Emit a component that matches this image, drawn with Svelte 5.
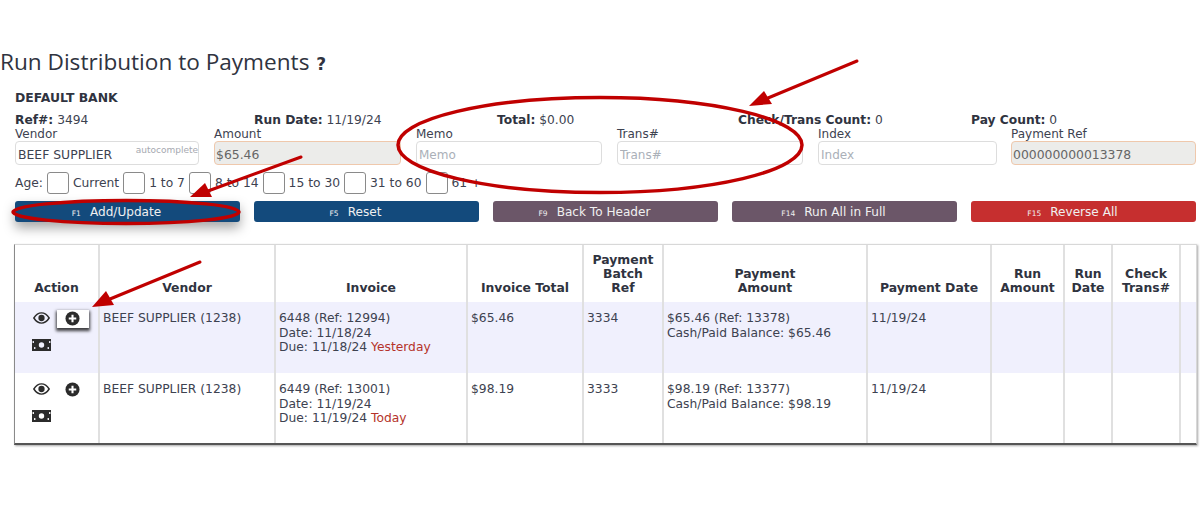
<script>
  const info = [
    ['Ref#:', '3494'],
    ['Run Date:', '11/19/24'],
    ['Total:', '$0.00'],
    ['Check/Trans Count:', '0'],
    ['Pay Count:', '0']
  ];

  const ages = ['Current', '1 to 7', '8 to 14', '15 to 30', '31 to 60', '61 +'];

  const buttons = [
    { key: 'F1', label: 'Add/Update', kind: 'blue glow' },
    { key: 'F5', label: 'Reset', kind: 'blue' },
    { key: 'F9', label: 'Back To Header', kind: 'plum' },
    { key: 'F14', label: 'Run All in Full', kind: 'plum' },
    { key: 'F15', label: 'Reverse All', kind: 'red' }
  ];

  const rows = [
    {
      invoice: '6448 (Ref: 12994)', date: '11/18/24', due: '11/18/24', when: 'Yesterday',
      total: '$65.46', batch: '3334', payment: '$65.46 (Ref: 13378)', balance: '$65.46', highlight: true
    },
    {
      invoice: '6449 (Ref: 13001)', date: '11/19/24', due: '11/19/24', when: 'Today',
      total: '$98.19', batch: '3333', payment: '$98.19 (Ref: 13377)', balance: '$98.19', highlight: false
    }
  ];
</script>

<main class="page">
  <h1>Run Distribution to Payments <span class="help">?</span></h1>

  <section class="form">
    <div class="bank">DEFAULT BANK</div>

    <div class="info">
      {#each info as [label, value]}
        <div><b>{label}</b> {value}</div>
      {/each}
    </div>

    <div class="fields">
      <label>
        <span>Vendor</span>
        <div class="vendor">
          <input value="BEEF SUPPLIER" />
          <small>autocomplete</small>
        </div>
      </label>
      <label><span>Amount</span><input class="locked" value="$65.46" readonly /></label>
      <label><span>Memo</span><input placeholder="Memo" /></label>
      <label><span>Trans#</span><input placeholder="Trans#" /></label>
      <label><span>Index</span><input placeholder="Index" /></label>
      <label><span>Payment Ref</span><input class="locked" value="000000000013378" readonly /></label>
    </div>

    <div class="ages">
      <span>Age:</span>
      {#each ages as age}
        <i class="box"></i><span class="age">{age}</span>
      {/each}
    </div>

    <div class="actions">
      {#each buttons as b}
        <button type="button" class={b.kind}><small>{b.key}</small>{b.label}</button>
      {/each}
    </div>
  </section>

  <div class="card">
    <table>
      <colgroup>
        <col style="width:84px" /><col style="width:176px" /><col style="width:192px" /><col style="width:116px" />
        <col style="width:80px" /><col style="width:204px" /><col style="width:124px" /><col style="width:73px" />
        <col style="width:48px" /><col style="width:68px" /><col />
      </colgroup>
      <thead>
        <tr>
          <th>Action</th><th>Vendor</th><th>Invoice</th><th>Invoice Total</th>
          <th>Payment<br />Batch<br />Ref</th><th>Payment<br />Amount</th><th>Payment Date</th>
          <th>Run<br />Amount</th><th>Run<br />Date</th><th>Check<br />Trans#</th><th></th>
        </tr>
      </thead>
      <tbody>
        {#each rows as r}
          <tr class:highlight={r.highlight}>
            <td class="icons">
              <div class="icon-row">
                <svg class="eye" viewBox="0 0 20 14" width="17" height="12" aria-hidden="true">
                  <path d="M1 7C3.500 3 6.500 1 10 1s6.500 2 9 6c-2.500 4-5.500 6-9 6s-6.500-2-9-6z" fill="none" stroke="#2b2b2b" stroke-width="1.700" />
                  <circle cx="10" cy="7" r="3.700" fill="#2b2b2b" />
                </svg>
                <span class="plus" class:pressed={r.highlight}>
                  <svg viewBox="0 0 16 16" width="15" height="15" aria-hidden="true">
                    <circle cx="8" cy="8" r="7.500" fill="#2b2b2b" />
                    <path d="M8 4v8M4 8h8" stroke="#fff" stroke-width="2.200" />
                  </svg>
                </span>
              </div>
              <svg class="money" viewBox="0 0 19 12" width="19" height="12" aria-hidden="true">
                <path fill-rule="evenodd" fill="#2b2b2b" d="M0 0h19v12H0zM9.500 3.300a2.700 2.700 0 1 0 0 5.400 2.700 2.700 0 0 0 0-5.400zM2 2.200a1 1 0 1 0 0 1.600zM17 2.200a1 1 0 1 1 0 1.600zM2 8.200a1 1 0 1 1 0 1.600zM17 8.200a1 1 0 1 0 0 1.600z" />
              </svg>
            </td>
            <td>BEEF SUPPLIER (1238)</td>
            <td>{r.invoice}<br />Date: {r.date}<br />Due: {r.due} <span class="when">{r.when}</span></td>
            <td>{r.total}</td>
            <td>{r.batch}</td>
            <td>{r.payment}<br />Cash/Paid Balance: {r.balance}</td>
            <td>11/19/24</td>
            <td></td><td></td><td></td><td></td>
          </tr>
        {/each}
      </tbody>
    </table>
  </div>

  <!-- red hand-drawn callouts that sit over the page -->
  <svg class="callouts" viewBox="0 0 1200 532" width="1200" height="532" aria-hidden="true">
    <g fill="none" stroke="#c00000" stroke-width="3.500">
      <ellipse cx="600" cy="145" rx="202" ry="47.500" />
      <ellipse cx="126" cy="212" rx="113" ry="11.500" />
    </g>
    <g stroke="#c00000" stroke-width="3" stroke-linecap="round">
      <path d="M857 61 768 98" />
      <path d="M301 157 208 191" />
      <path d="M200 262 110 299" />
    </g>
    <g fill="#c00000">
      <polygon points="749,106 764,91 772,104" />
      <polygon points="190,197 205,183 212,197" />
      <polygon points="92,307 106,291 114,305" />
    </g>
  </svg>
</main>

<style>
  :global(body) {
    background: #fff;
  }

  .page {
    position: relative;
    width: 1200px;
    height: 532px;
    overflow: hidden;
    font-family: "DejaVu Sans", Verdana, sans-serif;
    font-size: 12px;
    color: #3d4250;
  }

  h1 {
    margin: 0;
    padding-top: 45px;
    height: 45px;
    font-family: "Open Sans", sans-serif;
    font-size: 22.600px;
    line-height: 33px;
    font-weight: 400;
    color: #2f3340;
    white-space: nowrap;
  }

  .help {
    font-family: "DejaVu Sans", sans-serif;
    font-weight: 700;
    font-size: 17px;
    margin-left: 1px;
  }

  .form {
    padding: 0 4px 0 15px;
  }

  .bank {
    font-weight: 700;
    font-size: 12.400px;
    line-height: 16px;
    color: #2f3340;
  }

  .info {
    display: grid;
    grid-template-columns: 239px 243px 241px 233px 1fr;
    margin-top: 7px;
    font-size: 12.250px;
    line-height: 14px;
    white-space: nowrap;
  }

  .info b {
    color: #2f3340;
  }

  .fields {
    display: grid;
    grid-template-columns: 184px 187px 186px 186px 179px 184px;
    column-gap: 15px;
  }

  .fields label {
    display: block;
  }

  .fields label:last-child {
    margin-left: -1px;
  }

  .fields span {
    display: block;
    line-height: 14px;
  }

  input {
    display: block;
    box-sizing: border-box;
    width: 100%;
    height: 24px;
    padding: 3px 2px 0;
    font: inherit;
    color: #3d4250;
    background: #fff;
    border: 1px solid #dddddd;
    border-radius: 4px;
    outline: none;
  }

  .vendor input {
    font-size: 12.400px;
  }

  input::placeholder {
    color: #aab0b8;
  }

  input.locked {
    background: #ececea;
    border-color: #efc8ac;
    color: #666;
    padding: 3px 1px 0;
    font-size: 12.400px;
  }

  .vendor {
    position: relative;
  }

  .vendor small {
    position: absolute;
    top: 3px;
    right: 1px;
    font-size: 9px;
    line-height: 12px;
    color: #a6a9b0;
  }

  .ages {
    display: flex;
    align-items: center;
    height: 22px;
    margin-top: 7px;
    white-space: nowrap;
    font-size: 12.300px;
  }

  .box {
    flex: none;
    box-sizing: border-box;
    width: 22px;
    height: 22px;
    margin-left: 4px;
    border: 1px solid #8a8a8a;
    border-radius: 3px;
    background: #fff;
  }

  .age {
    margin-left: 4px;
  }

  .actions {
    display: grid;
    grid-template-columns: repeat(5, 225px);
    column-gap: 14px;
    margin-top: 7px;
  }

  button {
    height: 21px;
    padding: 0 22px 0 0;
    border: none;
    border-radius: 3px;
    font: inherit;
    font-size: 12.100px;
    color: #f0f0f0;
  }

  button small {
    font-size: 7.500px;
    margin-right: 9px;
  }

  .blue { background: #134a7c; }
  .plum { background: #6b5668; }
  .red { background: #c62f2f; }

  .glow {
    box-shadow: 0 6px 12px rgba(0, 0, 0, 0.35);
  }

  .card {
    box-sizing: border-box;
    width: 1183px;
    margin: 22px 0 0 14px;
    border: 1px solid #d8d8d8;
    border-left-color: #8a8a8a;
    border-bottom: 2px solid #555;
    box-shadow: 1px 1px 2px rgba(0, 0, 0, 0.35);
  }

  table {
    width: 100%;
    table-layout: fixed;
    border-collapse: collapse;
  }

  th {
    box-sizing: border-box;
    height: 57px;
    padding: 0 2px 7px;
    vertical-align: bottom;
    font-size: 12.400px;
    line-height: 14px;
    color: #2f3340;
    border-left: 2px solid #e0e0e0;
  }

  td {
    box-sizing: border-box;
    height: 70px;
    padding: 9px 3px 0;
    vertical-align: top;
    font-size: 12.300px;
    line-height: 14.500px;
    white-space: nowrap;
    border-left: 2px solid #e0e0e0;
  }

  th:first-child,
  td:first-child {
    border-left: none;
  }

  tr.highlight td {
    height: 71px;
    background: #f0f0fd;
  }

  .when {
    color: #b5332a;
  }

  td.icons {
    padding: 1px 0 0 18px;
  }

  .icon-row {
    display: flex;
    align-items: center;
    gap: 15px;
    height: 30px;
  }

  .eye {
    flex: none;
  }

  .plus {
    display: flex;
    position: relative;
  }

  .plus.pressed::before {
    content: "";
    position: absolute;
    inset: -1px -9px -2px -8px;
    background: #fff;
    box-shadow: 0 2px 3px 1px rgba(0, 0, 0, 0.75);
  }

  .plus svg {
    position: relative;
  }

  .money {
    display: block;
    margin: 6px 0 0 -1px;
  }

  .callouts {
    position: absolute;
    top: 0;
    left: 0;
    pointer-events: none;
  }
</style>
